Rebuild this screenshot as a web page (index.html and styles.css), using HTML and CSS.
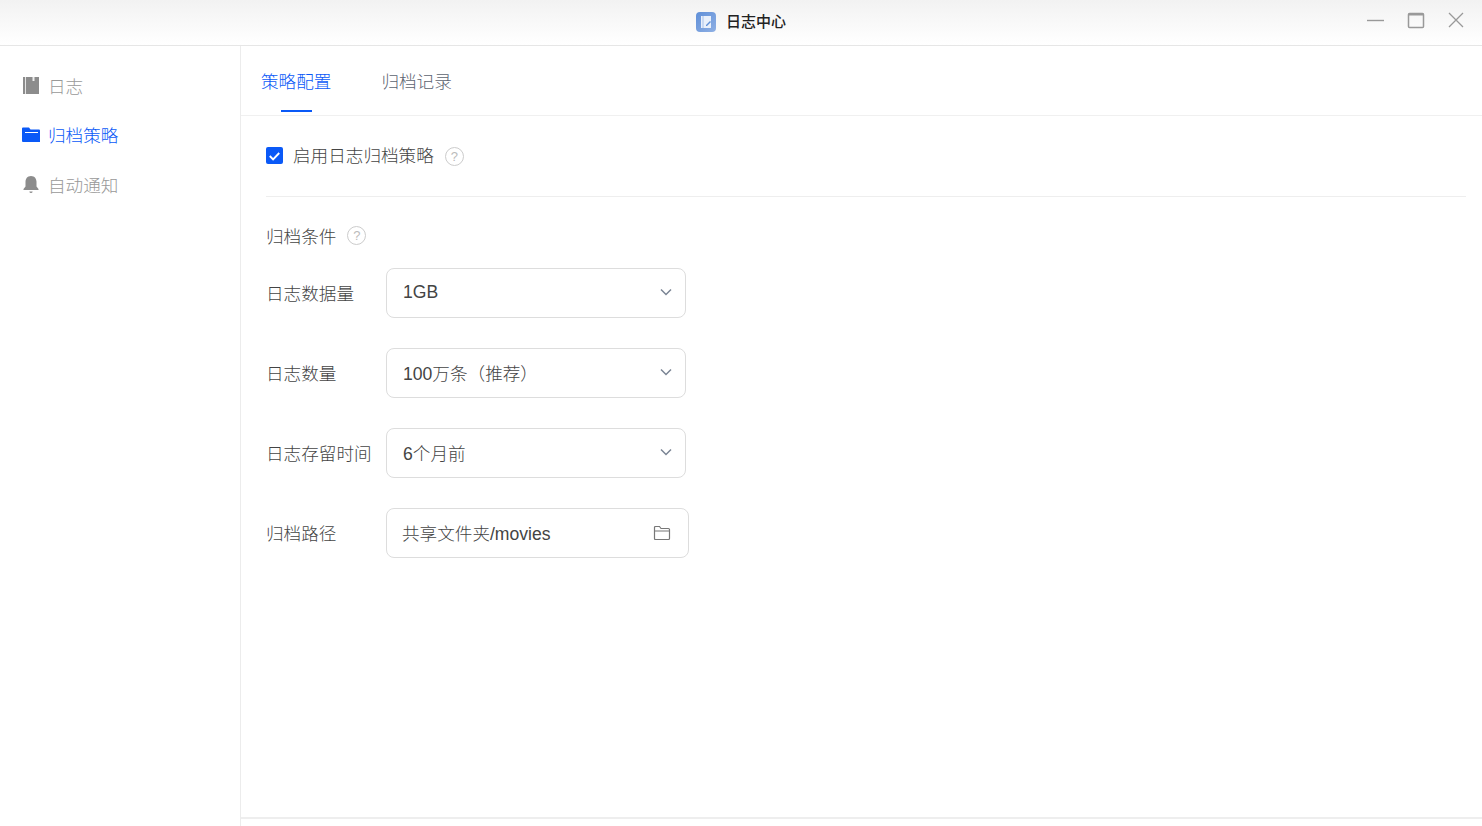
FILE: index.html
```html
<!DOCTYPE html>
<html>
<head>
    <meta charset="UTF-8">
    <title>日志中心</title>
    <link rel="stylesheet" href="styles.css">
</head>
<body>
    <div class="titlebar">
        <div class="app-title">
            <svg class="app-icon" width="20" height="20" viewBox="0 0 20 20">
                <defs>
                    <linearGradient id="appbg" x1="0" y1="0" x2="1" y2="1">
                        <stop offset="0" stop-color="#5f8fd8"/>
                        <stop offset="1" stop-color="#8fb0e4"/>
                    </linearGradient>
                </defs>
                <rect width="20" height="20" rx="4" fill="url(#appbg)"/>
                <path d="M5 4h10v12H5z" fill="#e9f0fb"/>
                <path d="M7 4v12" stroke="#a9c2ea" stroke-width="1"/>
                <path d="M10 13l4-4 1 1-4 4h-1z" fill="#5f8fd8"/>
            </svg>
            <span>日志中心</span>
        </div>
        <div class="win-controls">
            <svg width="18" height="18" viewBox="0 0 18 18"><path d="M0 9.5h17" stroke="#999" stroke-width="1.4"/></svg>
            <svg width="18" height="18" viewBox="0 0 18 18"><rect x="1.5" y="2.5" width="15" height="14" rx="1" fill="none" stroke="#999" stroke-width="1.5"/><path d="M1.5 3.5h15" stroke="#999" stroke-width="2"/></svg>
            <svg width="18" height="18" viewBox="0 0 18 18"><path d="M2 2l14 14M16 2L2 16" stroke="#999" stroke-width="1.3"/></svg>
        </div>
    </div>

    <div class="main">
        <div class="sidebar">
            <div class="nav-item">
                <svg class="nav-icon" width="18" height="18" viewBox="0 0 18 18"><path d="M1 0h16v17H1z" fill="#8c8c8c"/><path d="M3 0h1v17H3z" fill="#e4e4e4"/><path d="M10.500 0h2v4h-2z" fill="#eee"/></svg>
                <span>日志</span>
            </div>
            <div class="nav-item active">
                <svg class="nav-icon" width="18" height="18" viewBox="0 0 18 18"><path d="M0 2.500q0-1 1-1h6l1.500 2H17q1 0 1 1V16H1q-1 0-1-1z" fill="#0a59f7"/><path d="M3 6.500h13" stroke="#fff" stroke-width="1"/></svg>
                <span>归档策略</span>
            </div>
            <div class="nav-item">
                <svg class="nav-icon" width="18" height="18" viewBox="0 0 18 18"><path d="M9 0c3.800 0 5.500 2.800 5.500 5.800v4.700l2 2.500v1H1.500v-1l2-2.500V5.800C3.500 2.800 5.200 0 9 0z" fill="#8c8c8c"/><path d="M7.300 15.500h3.400q-.3 1.500-1.700 1.500t-1.700-1.500z" fill="#8c8c8c"/></svg>
                <span>自动通知</span>
            </div>
        </div>

        <div class="content">
            <div class="tabs">
                <div class="tab active">策略配置</div>
                <div class="tab">归档记录</div>
            </div>
            <div class="panel">
                <div class="enable-row">
                    <span class="checkbox">
                        <svg width="18" height="18" viewBox="0 0 18 18"><path d="M4 9l3.500 3.500L14 5.800" fill="none" stroke="#fff" stroke-width="2"/></svg>
                    </span>
                    <span class="enable-label">启用日志归档策略</span>
                    <span class="help">?</span>
                </div>
                <div class="divider"></div>
                <div class="section-title">
                    <span>归档条件</span>
                    <span class="help">?</span>
                </div>
                <div class="form-row">
                    <label>日志数据量</label>
                    <div class="field">
                        <span>1GB</span>
                        <svg class="chevron" width="12" height="8" viewBox="0 0 12 8"><path d="M1 1.500l5 5 5-5" fill="none" stroke="#7a8494" stroke-width="1.500"/></svg>
                    </div>
                </div>
                <div class="form-row">
                    <label>日志数量</label>
                    <div class="field">
                        <span>100万条（推荐）</span>
                        <svg class="chevron" width="12" height="8" viewBox="0 0 12 8"><path d="M1 1.500l5 5 5-5" fill="none" stroke="#7a8494" stroke-width="1.500"/></svg>
                    </div>
                </div>
                <div class="form-row">
                    <label>日志存留时间</label>
                    <div class="field">
                        <span>6个月前</span>
                        <svg class="chevron" width="12" height="8" viewBox="0 0 12 8"><path d="M1 1.500l5 5 5-5" fill="none" stroke="#7a8494" stroke-width="1.500"/></svg>
                    </div>
                </div>
                <div class="form-row">
                    <label>归档路径</label>
                    <div class="field path">
                        <span>共享文件夹/movies</span>
                        <svg width="18" height="16" viewBox="0 0 18 16"><path d="M1.500 13.500v-11q0-1 1-1h4l1.500 2h7.500q1 0 1 1v9q0 1-1 1h-13q-1 0-1-1zM1.500 6h15" fill="none" stroke="#777" stroke-width="1.200"/></svg>
                    </div>
                </div>
            </div>
            <div class="footer"></div>
        </div>
    </div>
</body>
</html>
```

FILE: styles.css
```css
html, body { height: 100%; }
body { margin: 0; height: 826px; overflow: hidden; display: flex; flex-direction: column; background: #fff; color: #444; font-family: "Liberation Sans", "Noto Sans CJK SC", sans-serif; font-size: 17.6px; font-weight: 300; }

.titlebar { flex: 0 0 46px; box-sizing: border-box; border-bottom: 1px solid #e6e6e6; background: linear-gradient(#f2f2f2, #fff); display: flex; align-items: center; justify-content: center; position: relative; }
.app-title { display: flex; align-items: center; gap: 10px; font-size: 15px; font-weight: 500; color: #222; margin-top: -4px; }
.app-icon { display: block; margin-top: 2px; }
.win-controls { position: absolute; right: 17px; top: 11px; display: flex; gap: 22px; }

.main { flex: 1; display: flex; min-height: 0; }
.sidebar { flex: 0 0 240px; border-right: 1px solid #ececec; padding-top: 15.5px; }
.nav-item { height: 49.5px; display: flex; align-items: center; padding-left: 22px; gap: 8px; color: #999; }
.nav-item span { padding-bottom: 2px; }
.nav-item.active { color: #0a59f7; }
.nav-icon { display: block; margin-top: -1px; }

.content { flex: 1; display: flex; flex-direction: column; min-width: 0; }
.tabs { flex: none; border-bottom: 1px solid #f0f0f0; display: flex; gap: 50px; padding-left: 20px; }
.tab { position: relative; height: 69px; line-height: 72px; color: #5c6370; }
.tab.active { color: #0a59f7; }
.tab.active::after { content: ""; position: absolute; left: 20px; width: 31px; bottom: 3px; height: 2px; background: #0a59f7; }

.panel { flex: 1; padding: 0 16px 0 25px; }
.enable-row { height: 80px; display: flex; align-items: center; }
.checkbox { width: 17px; height: 17px; border-radius: 2px; background: #0a59f7; display: flex; align-items: center; justify-content: center; margin: -1px 10px 0 0; }
.checkbox svg { display: block; }
.enable-label { margin-right: 11px; padding-bottom: 4px; }
.help { width: 17px; height: 17px; border: 1px solid #ccc; border-radius: 50%; color: #bbb; font-size: 13px; line-height: 17px; text-align: center; }
.divider { height: 1px; background: #eee; }
.section-title { height: 71px; display: flex; align-items: center; gap: 11px; padding-top: 6px; box-sizing: border-box; }
.form-row { display: flex; align-items: center; height: 50px; margin-bottom: 30px; }
.form-row label { width: 120px; flex: none; color: #444; padding-bottom: 2px; }
.field { box-sizing: border-box; width: 300px; height: 50px; border: 1px solid #ddd; border-radius: 8px; padding: 0 13px 0 16px; display: flex; align-items: center; justify-content: space-between; color: #444; }
.field span { padding-bottom: 2px; }
.chevron { margin-bottom: 2px; }
.field.path { width: 303px; padding-left: 15px; padding-right: 17px; }
.footer { flex: 0 0 9px; box-sizing: border-box; border-top: 2px solid #eee; }
```
